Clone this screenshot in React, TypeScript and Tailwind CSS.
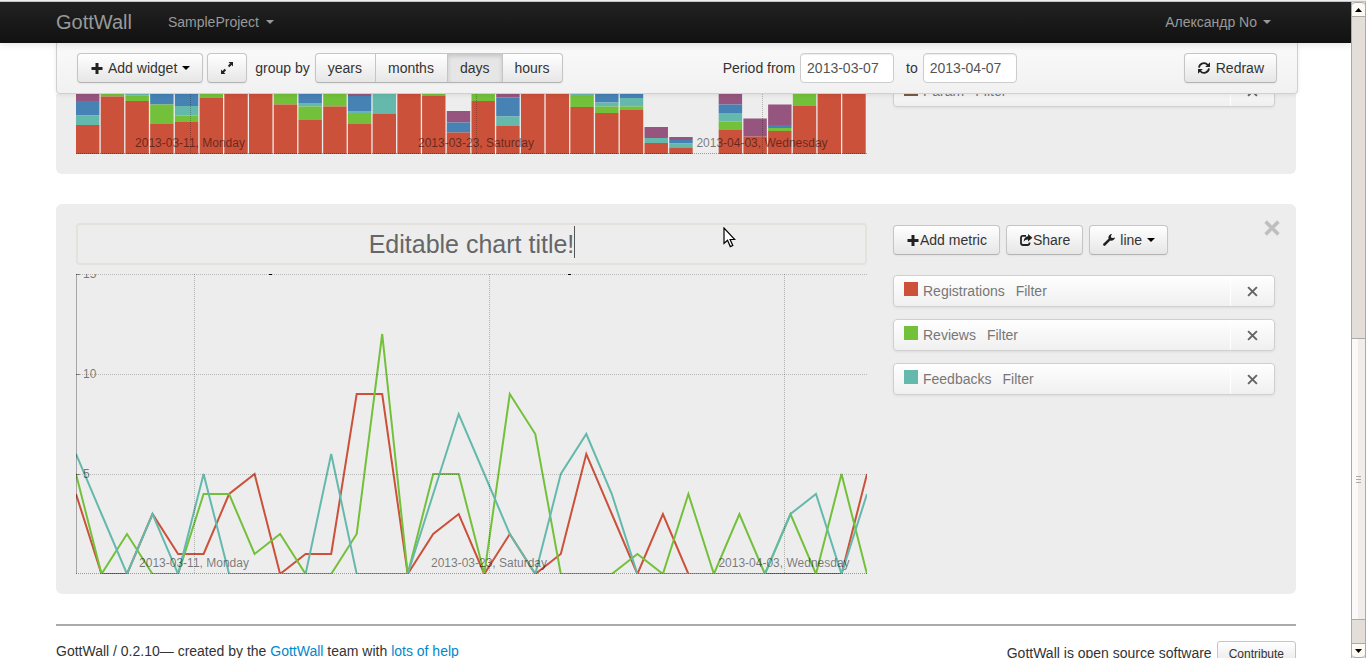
import type { ReactNode } from "react";

const RED = "#cb513a";
const GREEN = "#73c03a";
const TEAL = "#65b9ac";
const BLUE = "#4682b4";
const PURPLE = "#96557e";

const BUTTON =
  "flex h-[30px] items-center rounded border border-[#c5c5c5] border-b-[#b3b3b3] bg-linear-to-b from-white to-[#e6e6e6] px-3 text-sm text-[#333] shadow-[inset_0_1px_0_rgba(255,255,255,0.2),0_1px_2px_rgba(0,0,0,0.05)]";

function Caret({ className }: { className: string }) {
  return (
    <svg width="8" height="4" viewBox="0 0 8 4" className={className} aria-hidden="true">
      <path d="M0 0H8L4 4Z" fill="currentColor" />
    </svg>
  );
}

function Icon({ children }: { children: ReactNode }) {
  return (
    <svg width="14" height="14" viewBox="0 0 14 14" fill="#222" className="shrink-0" aria-hidden="true">
      {children}
    </svg>
  );
}

function PlusIcon() {
  return (
    <Icon>
      <path d="M5.5 2h3v4h4v3h-4v4h-3V9h-4V6h4Z" />
    </Icon>
  );
}

function ExpandIcon() {
  return (
    <Icon>
      <path d="M8.500 1H13v4.500L11.600 4.100 9.300 6.200 7.900 4.800 10 2.500ZM5.500 13H1V8.500l1.400 1.400L4.700 7.800 6.100 9.200 4 11.500Z" />
    </Icon>
  );
}

function RefreshIcon() {
  return (
    <Icon>
      <g fill="none" stroke="#222" strokeWidth="1.8">
        <path d="M2 6.6A5 5 0 0 1 10.8 4" />
        <path d="M12 7.4A5 5 0 0 1 3.2 10" />
      </g>
      <path d="M13 1.2V6H8.2ZM1 12.8V8h4.8Z" />
    </Icon>
  );
}

function ShareIcon() {
  return (
    <Icon>
      <path
        d="M7 2.9H3.9Q2 2.9 2 4.8V10.1Q2 12 3.9 12H8.6Q10.5 12 10.5 10.1V9.4"
        fill="none"
        stroke="#222"
        strokeWidth="1.8"
      />
      <path d="M9 1l4.4 3.8L9 8.6V6.4C7.2 6.3 5.9 6.9 4.7 8.8 4.8 5.600 6.200 3.500 9 3.300Z" />
    </Icon>
  );
}

function WrenchIcon() {
  return (
    <Icon>
      <path d="M13 4.400A3.600 3.600 0 0 1 8.300 7.500L3.300 12.600A1.400 1.400 0 0 1 1.300 10.700L6.500 5.700A3.600 3.600 0 0 1 10 1.100L8.900 2.900 9.300 4.700 11.100 5.100Z" />
    </Icon>
  );
}

function CrossIcon({ size, color, weight }: { size: number; color: string; weight: number }) {
  return (
    <svg width={size} height={size} viewBox="0 0 10 10" aria-hidden="true">
      <path d="M1 1L9 9M9 1L1 9" stroke={color} strokeWidth={weight} />
    </svg>
  );
}

function Metric({ name, color }: { name: string; color: string }) {
  return (
    <div className="flex h-8 w-full shrink-0 items-stretch rounded border border-[#d0d0d0] bg-linear-to-b from-white to-[#f0f0f0] text-sm text-[#777] shadow-[0_1px_3px_rgba(0,0,0,0.07)]">
      <div className="flex flex-1 items-center pl-[10px]">
        <span className="mb-1 mr-[5px] size-[14px]" style={{ backgroundColor: color }} />
        <span className="mr-[11px]">{name}</span>
        <a href="#filter">Filter</a>
      </div>
      <button
        type="button"
        aria-label={`Remove ${name}`}
        className="flex w-11 items-center justify-center border-l border-white"
      >
        <CrossIcon size={11} color="#666" weight={1.800} />
      </button>
    </div>
  );
}

type Segment = [color: string, top: number];

/* Every bar lists its segments from the top down; each one runs to the next. */
const BARS: Segment[][] = [
  [[PURPLE, 0], [BLUE, 7], [TEAL, 21.5], [RED, 31]],
  [[GREEN, 0], [RED, 2.500]],
  [[TEAL, 0], [GREEN, 1.500], [RED, 7]],
  [[BLUE, 0], [GREEN, 10.500], [RED, 29.500]],
  [[BLUE, 0], [TEAL, 12], [GREEN, 21.500], [RED, 27.500]],
  [[GREEN, 0], [RED, 3.500]],
  [[RED, 0]],
  [[RED, 0]],
  [[GREEN, 0], [RED, 10.500]],
  [[BLUE, 0], [TEAL, 9], [GREEN, 12.500], [RED, 25.500]],
  [[GREEN, 0], [RED, 12.500]],
  [[PURPLE, 0], [BLUE, 2], [TEAL, 17], [GREEN, 19], [RED, 29.500]],
  [[TEAL, 0], [RED, 19.500]],
  [[RED, 0]],
  [[GREEN, 0], [RED, 2]],
  [[PURPLE, 17], [BLUE, 28.500], [RED, 38.500]],
  [[GREEN, 0], [RED, 7]],
  [[PURPLE, 0], [BLUE, 3.500], [TEAL, 22.500], [RED, 32]],
  [[RED, 0]],
  [[RED, 0]],
  [[TEAL, 0], [GREEN, 2], [RED, 13]],
  [[BLUE, 0], [TEAL, 8.500], [GREEN, 12.500], [RED, 19]],
  [[BLUE, 0], [TEAL, 4], [GREEN, 12.500], [RED, 16]],
  [[PURPLE, 33], [TEAL, 44], [RED, 49]],
  [[PURPLE, 43], [BLUE, 46], [TEAL, 49.500], [RED, 53.500]],
  [],
  [[PURPLE, 0], [BLUE, 10.500], [TEAL, 19], [GREEN, 27.500], [RED, 36]],
  [[PURPLE, 24.500], [RED, 42.500]],
  [[PURPLE, 10.500], [BLUE, 31], [GREEN, 34], [RED, 37]],
  [[GREEN, 0], [RED, 12]],
  [[RED, 0]],
  [[RED, 0]],
];

const LABELS = ["2013-03-11, Monday", "2013-03-23, Saturday", "2013-04-03, Wednesday"];

function XAxis({ ticks, height }: { ticks: number[]; height: number }) {
  return (
    <g>
      {ticks.map((x, i) => (
        <g key={x}>
          <path d={`M${x}.5 0V${height}`} stroke="#000" strokeOpacity="0.25" strokeDasharray="1 1" />
          <text
            x={x}
            y={height - 7}
            textAnchor="middle"
            fontSize="12"
            fill="#000"
            fillOpacity="0.5"
            fontFamily="Liberation Sans, Arial, sans-serif"
          >
            {LABELS[i]}
          </text>
        </g>
      ))}
    </g>
  );
}

function BarChart() {
  const pitch = 791 / 32;
  return (
    <svg viewBox="0 0 791 60" className="block w-full" role="img" aria-label="Stacked bars by day">
      {BARS.map((bar, i) =>
        bar.map(([color, top], j) => {
          const bottom = j + 1 < bar.length ? bar[j + 1][1] : 60;
          return (
            <rect key={`${i}-${j}`} x={i * pitch} y={top} width={pitch - 1.300} height={bottom - top} fill={color} />
          );
        }),
      )}
      <path d="M0 59.5H791" stroke="#000" strokeOpacity="0.35" strokeDasharray="1 1" />
      <XAxis ticks={[114, 400, 686]} height={60} />
    </svg>
  );
}

const SERIES = [
  { color: RED, values: [4, 0, 0, 3, 1, 1, 4, 5, 0, 1, 1, 9, 9, 0, 2, 3, 0, 2, 0, 1, 6, 3, 0, 3, 0, 0, 0, 0, 0, 0, 0, 5] },
  { color: GREEN, values: [5, 0, 2, 0, 0, 4, 4, 1, 2, 0, 0, 2, 12, 0, 5, 5, 0, 9, 7, 0, 0, 0, 1, 0, 4, 0, 3, 0, 3, 0, 5, 0] },
  { color: TEAL, values: [6, 3, 0, 3, 0, 5, 0, 0, 0, 0, 6, 0, 0, 0, 4, 8, 5, 2, 0, 5, 7, 4, 0, 0, 0, 0, 0, 0, 3, 4, 0, 4] },
];

function LineChart() {
  return (
    <svg viewBox="0 0 791 300" className="block w-full" role="img" aria-label="Metrics by day">
      {SERIES.map(({ color, values }) => (
        <polyline
          key={color}
          points={values.map((v, i) => `${((i * 791) / 31).toFixed(1)},${300 - v * 20}`).join(" ")}
          fill="none"
          stroke={color}
          strokeWidth="2"
        />
      ))}
      <path d="M0.5 0V300" stroke="#000" strokeOpacity="0.3" />
      <path d="M0 299.5H791" stroke="#000" strokeOpacity="0.35" strokeDasharray="1 1" />
      {[15, 10, 5].map((v) => {
        const y = 300 - v * 20;
        return (
          <g key={v}>
            <path d={`M0 ${y + 0.5}H791`} stroke="#000" strokeOpacity="0.22" strokeDasharray="1 1" />
            <path d={`M0 ${y + 0.5}H4`} stroke="#000" strokeOpacity="0.4" />
            <text
              x="7"
              y={y + 4}
              fontSize="12"
              fill="#000"
              fillOpacity="0.5"
              fontFamily="Liberation Sans, Arial, sans-serif"
            >
              {v}
            </text>
          </g>
        );
      })}
      <path d="M193 0h3v1h-3ZM492 0h3v1h-3Z" fill="#000" />
      <XAxis ticks={[118, 413, 708]} height={300} />
    </svg>
  );
}

function Scrollbar() {
  return (
    <div className="flex w-[15px] shrink-0 flex-col border-x border-[#aaa] bg-[#e3dfd8]" aria-hidden="true">
      <div className="flex h-[15px] items-center justify-center rounded-t border-y border-[#aaa] bg-[#fdf9f3]">
        <svg width="7" height="4" viewBox="0 0 7 4">
          <path d="M3.500 0L7 4H0Z" />
        </svg>
      </div>
      <div className="flex-[322]" />
      <div className="flex flex-[281] flex-col items-center justify-center gap-[2px] border-y border-[#aaa] bg-linear-to-r from-[#fbfaf8] from-50% to-[#efeeec] to-50%">
        <span className="h-px w-[5px] bg-[#aaa]" />
        <span className="h-px w-[5px] bg-[#aaa]" />
        <span className="h-px w-[5px] bg-[#aaa]" />
      </div>
      <div className="flex-[23]" />
      <div className="flex h-[15px] items-center justify-center rounded-b border-y border-[#aaa] bg-[#fdf9f3]">
        <svg width="7" height="4" viewBox="0 0 7 4">
          <path d="M0 0H7L3.500 4Z" />
        </svg>
      </div>
    </div>
  );
}

function Toolbar() {
  const input =
    "h-[30px] w-[94px] rounded border border-[#ccc] bg-white px-[6px] text-sm text-[#555] shadow-[inset_0_1px_1px_rgba(0,0,0,0.075)] outline-none";
  return (
    <div className="relative z-10 -mr-[2px] flex h-[51px] items-center rounded-b border border-t-0 border-[#d0d0d0] bg-linear-to-b from-[#fafafa] to-[#f1f1f1] pl-5 pr-5 shadow-[0_1px_4px_rgba(0,0,0,0.08)]">
      <button type="button" className={BUTTON}>
        <PlusIcon />
        <span className="ml-1">Add widget</span>
        <Caret className="ml-[5px] text-black" />
      </button>
      <button type="button" aria-label="Expand" className={`${BUTTON} ml-1`}>
        <ExpandIcon />
      </button>
      <span className="ml-2 mr-[5px]">group by</span>
      <div className="flex h-[30px] overflow-hidden rounded border border-[#c5c5c5] border-b-[#b3b3b3] bg-linear-to-b from-white to-[#e6e6e6] text-[#333] shadow-[0_1px_2px_rgba(0,0,0,0.05)]">
        <button type="button" className="border-r border-[#c5c5c5] pl-3 pr-[13px]">years</button>
        <button type="button" className="border-r border-[#c5c5c5] pl-3 pr-[13px]">months</button>
        <button
          type="button"
          aria-pressed="true"
          className="border-r border-[#c5c5c5] bg-[#e6e6e6] px-3 shadow-[inset_0_2px_4px_rgba(0,0,0,0.15)]"
        >
          days
        </button>
        <button type="button" className="px-3">hours</button>
      </div>
      <label className="ml-auto flex items-center gap-[5px]">
        Period from
        <input type="text" defaultValue="2013-03-07" className={input} />
      </label>
      <label className="ml-3 mr-[167px] flex items-center gap-[5px]">
        to
        <input type="text" defaultValue="2013-04-07" className={input} />
      </label>
      <button type="button" className={BUTTON}>
        <RefreshIcon />
        <span className="ml-[5px]">Redraw</span>
      </button>
    </div>
  );
}

export default function App() {
  return (
    <div className="flex h-screen flex-col overflow-hidden bg-white font-['Liberation_Sans',Arial,sans-serif] text-sm leading-5 text-[#333]">
      <div className="h-[2px] shrink-0 border-b border-[#c4c4c4] bg-[#eee]" />
      <div className="flex min-h-0 flex-1">
        <div className="min-w-0 flex-1 overflow-hidden">
          <header className="relative z-20 flex h-[41px] items-center bg-linear-to-b from-[#222] to-[#111] pb-[2px] pl-14 pr-20 text-[#999] shadow-[0_1px_8px_rgba(0,0,0,0.12)]">
            <a href="#home" className="text-xl">GottWall</a>
            <button type="button" className="ml-9 flex items-center">
              SampleProject
              <Caret className="ml-[7px]" />
            </button>
            <button type="button" className="ml-auto flex items-center">
              Александр No
              <Caret className="ml-[6px]" />
            </button>
          </header>

          <main className="pl-14 pr-[55px]">
            <Toolbar />

            <section className="grid grid-cols-[minmax(0,1fr)_382px] gap-x-[26px] rounded-b-md bg-[#ededed] pb-5 pl-5 pr-[21px]">
              <BarChart />
              <div className="flex h-[13px] items-end">
                <Metric name="Param" color="#7b5b3e" />
              </div>
            </section>

            <section className="relative mt-[30px] grid grid-cols-[minmax(0,1fr)_382px] gap-x-[26px] rounded-md bg-[#ededed] pb-5 pl-5 pr-[21px] pt-[19px]">
              <div>
                <div className="relative mb-[9px]">
                  <input
                    type="text"
                    aria-label="Chart title"
                    defaultValue="Editable chart title!"
                    className="block h-[42px] w-full rounded-sm border-2 border-[#e5e1dd] bg-transparent text-center text-[25px] text-[#666] outline-none"
                  />
                  <span className="absolute left-[calc(50%+102px)] top-[3px] h-8 w-px bg-[#555]" />
                  <svg
                    width="13"
                    height="21"
                    viewBox="0 0 13 21"
                    className="absolute left-[647px] top-1"
                    aria-hidden="true"
                  >
                    <path
                      d="M1 1V16.500L4.500 13.300L7.300 19.600L9.800 18.500L7.100 12.500H11.800Z"
                      fill="#fff"
                      stroke="#000"
                      strokeWidth="1.200"
                    />
                  </svg>
                </div>
                <LineChart />
              </div>
              <div className="pt-[2px]">
                <div className="mb-5 flex gap-[6px]">
                  <button type="button" className={BUTTON}>
                    <PlusIcon />
                    Add metric
                  </button>
                  <button type="button" className={BUTTON}>
                    <ShareIcon />
                    Share
                  </button>
                  <button type="button" className={BUTTON}>
                    <WrenchIcon />
                    <span className="ml-1">line</span>
                    <Caret className="ml-[5px] text-black" />
                  </button>
                </div>
                <div className="flex flex-col gap-3">
                  <Metric name="Registrations" color={RED} />
                  <Metric name="Reviews" color={GREEN} />
                  <Metric name="Feedbacks" color={TEAL} />
                </div>
              </div>
              <button type="button" aria-label="Close widget" className="absolute right-4 top-4">
                <CrossIcon size={16} color="#bfbfbf" weight={2.300} />
              </button>
            </section>

            <footer className="mt-[30px] flex items-start border-t-2 border-[#aaa] pb-5 pt-[15px]">
              <p>
                GottWall / 0.2.10— created by the{" "}
                <a href="#gottwall" className="text-[#0088cc]">GottWall</a> team with{" "}
                <a href="#help" className="text-[#0088cc]">lots of help</a>
              </p>
              <p className="ml-auto mr-[5px] mt-[2px]">GottWall is open source software</p>
              <button
                type="button"
                className="rounded-[3px] border border-[#c5c5c5] bg-linear-to-b from-white to-[#e6e6e6] px-[11px] py-[2px] text-xs leading-5"
              >
                Contribute
              </button>
            </footer>
          </main>
        </div>
        <Scrollbar />
      </div>
    </div>
  );
}
